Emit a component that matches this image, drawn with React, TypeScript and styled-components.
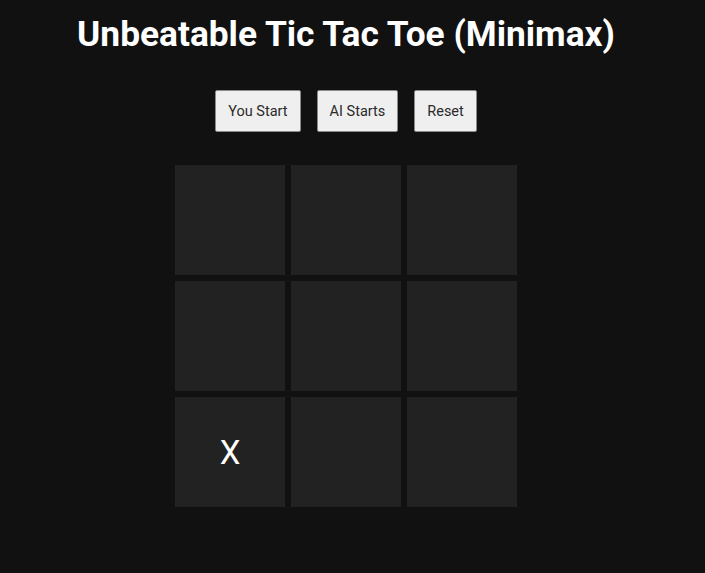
import * as React from 'react';
import styled, { createGlobalStyle } from 'styled-components';

const GlobalStyle = createGlobalStyle`
  html, body {
    margin: 0;
    padding: 0;
    background-color: #111111;
  }
  body {
    font-family: Roboto, "Liberation Sans", sans-serif;
    color: #ffffff;
  }
`;

type Mark = 'X' | 'O' | null;

const App: React.FC = () => {
  const [board, setBoard] = React.useState<Mark[]>([
    null, null, null,
    null, null, null,
    'X', null, null,
  ]);

  const reset = () => setBoard(Array(9).fill(null));

  return (
    <Container>
      <GlobalStyle />
      <Title>Unbeatable Tic Tac Toe (Minimax)</Title>
      <Controls>
        <Button onClick={reset}>You Start</Button>
        <Button>AI Starts</Button>
        <Button onClick={reset}>Reset</Button>
      </Controls>
      <Board>
        {board.map((cell, i) => (
          <Cell
            key={i}
            onClick={() => {
              if (cell) return;
              const next = board.slice();
              next[i] = 'X';
              setBoard(next);
            }}
          >
            {cell}
          </Cell>
        ))}
      </Board>
    </Container>
  );
};

export default App;

const Container = styled.div`
  display: flex;
  flex-direction: column;
  align-items: center;
  padding: 0 13px 66px 0;
`;

const Title = styled.h1`
  margin: 13px 0 0;
  font-size: 35.3px;
  font-weight: 700;
  line-height: 42px;
`;

const Controls = styled.div`
  display: flex;
  gap: 16px;
  margin-top: 35px;
`;

const Button = styled.button`
  height: 42px;
  padding: 0 12px;
  font-family: Roboto, "Liberation Sans", sans-serif;
  font-size: 14.5px;
  color: #2a2a2a;
  background-color: #efefef;
  border: 1px solid #8a8a8a;
  border-radius: 2px;
  cursor: pointer;
`;

const Board = styled.div`
  display: grid;
  grid-template-columns: repeat(3, 110px);
  grid-auto-rows: 110px;
  gap: 6px;
  margin-top: 33px;
`;

const Cell = styled.div`
  display: flex;
  align-items: center;
  justify-content: center;
  background-color: #222222;
  font-size: 33px;
  color: #ffffff;
  cursor: pointer;
`;
